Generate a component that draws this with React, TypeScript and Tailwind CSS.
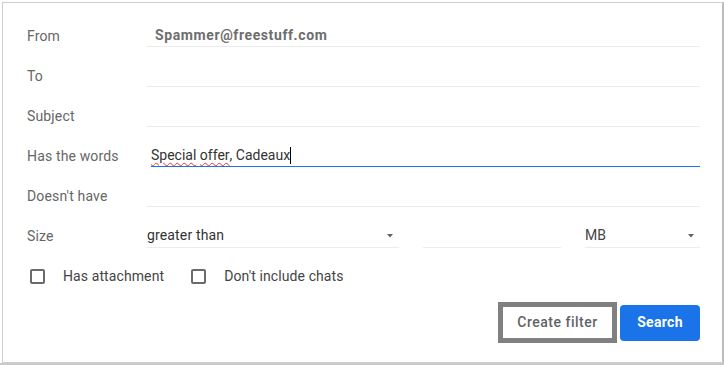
import React from "react";

function Caret() {
  return (
    <svg width="10" height="6" viewBox="0 0 10 6" className="text-[#5f6368]">
      <path d="M2 1h6L5 4.5z" fill="currentColor" />
    </svg>
  );
}

function Row({ label, children }: { label: string; children?: React.ReactNode }) {
  return (
    <div className="flex h-10 items-center">
      <div className="w-[120px] shrink-0 text-[14px] tracking-[0.15px] text-[#666]">{label}</div>
      {children}
    </div>
  );
}

function Checkbox({ label }: { label: string }) {
  return (
    <label className="flex items-center">
      <span className="ml-[3px] h-[15px] w-[15px] rounded-[2px] border-2 border-[#6b6b6b]" />
      <span className="ml-[18px] text-[14px] tracking-[0.1px] text-[#444]">{label}</span>
    </label>
  );
}

export default function App() {
  return (
    <div className="relative h-[365px] w-[724px] overflow-hidden bg-white font-['Roboto','Liberation_Sans',sans-serif]">
      <div className="ml-[2px] mt-[2px] h-[361px] w-[722px] border border-r-2 border-[#cfcfcf] border-r-[#bdbdbd] bg-white pl-[24px] pr-[22px] pt-[13px]">
        <Row label="From">
          <div className="h-[22px] flex-1 border-b border-[#ececec] pl-2 text-[14px] font-bold leading-[21px] tracking-[0.6px] text-[#6e6e6e]">
            Spammer@freestuff.com
          </div>
        </Row>
        <Row label="To">
          <div className="h-[22px] flex-1 border-b border-[#ececec]" />
        </Row>
        <Row label="Subject">
          <div className="h-[22px] flex-1 border-b border-[#ececec]" />
        </Row>
        <Row label="Has the words">
          <div className="ml-[4px] flex h-[22px] flex-1 items-center border-b border-[#1a73e8] text-[14px] leading-[21px] text-[#333]">
            <span className="underline decoration-[#e53935] decoration-wavy decoration-1 underline-offset-2">Special</span>
            <span>&nbsp;</span>
            <span className="underline decoration-[#e53935] decoration-wavy decoration-1 underline-offset-2">offer</span>
            <span>, Cadeaux</span>
            <span className="inline-block h-[17px] w-px bg-black" />
          </div>
        </Row>
        <Row label="Doesn't have">
          <div className="h-[22px] flex-1 border-b border-[#ececec]" />
        </Row>
        <Row label="Size">
          <div className="flex flex-1 gap-6">
            <div className="flex h-[23px] w-[252px] items-center justify-between border-b border-[#ececec] pr-[4px] text-[14px] tracking-[0.15px] text-[#333]">
              <span>greater than</span>
              <Caret />
            </div>
            <div className="h-[23px] w-[138px] border-b border-[#ececec]" />
            <div className="flex h-[23px] flex-1 items-center justify-between border-b border-[#ececec] pr-[4px] text-[14px] text-[#444]">
              <span>MB</span>
              <Caret />
            </div>
          </div>
        </Row>
        <div className="flex h-10 items-center gap-[24px]">
          <Checkbox label="Has attachment" />
          <Checkbox label="Don't include chats" />
        </div>
        <div className="mt-[6px] flex items-center justify-end gap-[3px]">
          <button className="flex h-[41px] w-[119px] items-center justify-center border-[5px] border-[#808080] bg-white text-[14px] font-medium tracking-[0.5px] text-[#5f6368]">
            Create filter
          </button>
          <button className="flex h-[36px] w-[80px] items-center justify-center rounded-[4px] bg-[#1a73e8] text-[14px] font-bold tracking-[0.3px] text-white">
            Search
          </button>
        </div>
      </div>
      <div className="h-[2px] w-full bg-[#c9c9c9]" />
    </div>
  );
}
